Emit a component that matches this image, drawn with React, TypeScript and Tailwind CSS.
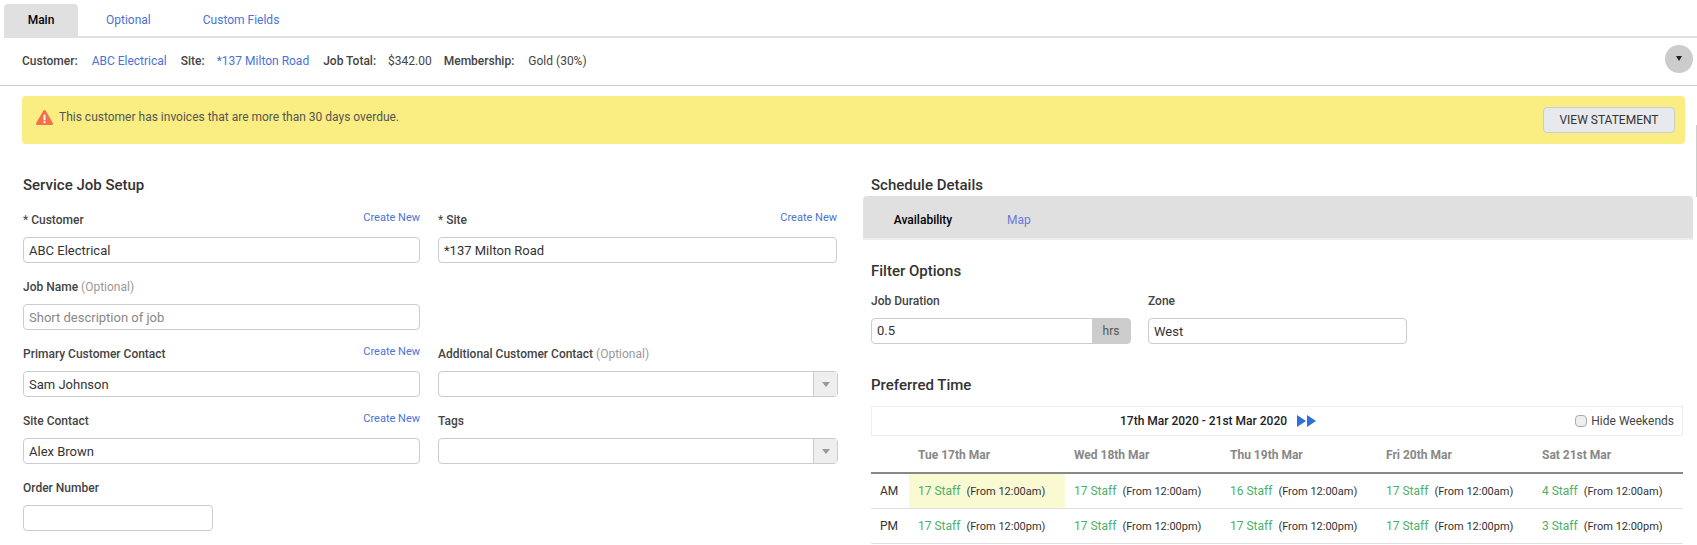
import React from "react";

const inputCls =
  "block h-6.5 w-full rounded-sm border border-[#ccc] bg-white px-1.25 text-[#333] placeholder:text-[#888] outline-none";

function Label({ children, note, link }: { children: React.ReactNode; note?: string; link?: boolean }) {
  return (
    <div className="mb-[9px] flex h-4 items-center justify-between">
      <span className="text-xs leading-4 font-medium text-[#444]">
        {children}
        {note && <span className="font-normal text-[#999]"> {note}</span>}
      </span>
      {link && <a className="relative -top-0.5 text-[11px] text-[#4a72d8]">Create New</a>}
    </div>
  );
}

function Field({ label, value, placeholder, link, note }: { label: React.ReactNode; value?: string; placeholder?: string; link?: boolean; note?: string }) {
  return (
    <div>
      <Label link={link} note={note}>{label}</Label>
      <input className={inputCls} defaultValue={value} placeholder={placeholder} readOnly />
    </div>
  );
}

function SelectField({ label, note }: { label: string; note?: string }) {
  return (
    <div>
      <Label note={note}>{label}</Label>
      <div className="-mr-px flex h-6.5 rounded-sm border border-[#ccc] bg-white">
        <div className="flex-1" />
        <div className="flex w-6 items-center justify-center border-l border-[#ccc] bg-[#eee]">
          <span className="border-x-4 border-t-[5px] border-x-transparent border-t-[#999]" />
        </div>
      </div>
    </div>
  );
}

function Required({ children }: { children: string }) {
  return (
    <>
      <span className="font-normal">* </span>
      {children}
    </>
  );
}

const days = ["Tue 17th Mar", "Wed 18th Mar", "Thu 19th Mar", "Fri 20th Mar", "Sat 21st Mar"];
const am = ["17", "17", "16", "17", "4"];
const pm = ["17", "17", "17", "17", "3"];
const gridCls = "grid grid-cols-[38px_repeat(4,156px)_1fr]";

function Slot({ staff, from, highlight }: { staff: string; from: string; highlight?: boolean }) {
  return (
    <div className={`flex items-center gap-1.5 pl-2.25 ${highlight ? "bg-[#f9f9d2]" : ""}`}>
      <span className="text-xs text-[#4caf6a]">{staff} Staff</span>
      <span className="mt-0.5 text-[11px] text-[#333]">(From {from})</span>
    </div>
  );
}

export default function App() {
  return (
    <div className="relative h-screen overflow-hidden bg-white font-['Roboto',sans-serif] text-[13px] text-[#333]">
      {/* Scrollbar sliver at the window edge */}
      <div className="absolute top-[125px] right-0 h-18 w-px bg-[#ccc]" />

      {/* Top tabs */}
      <div className="ml-1 flex h-9.5 items-end border-b-2 border-[#e0e0e0] pt-1">
        <div className="flex h-full w-[74px] items-center justify-center rounded-t-sm bg-[#e0e0e0] text-xs font-medium text-black">Main</div>
        <div className="flex h-full items-center pl-7 text-xs text-[#4a72d8]">Optional</div>
        <div className="flex h-full items-center pl-13 text-xs text-[#4a72d8]">Custom Fields</div>
      </div>

      {/* Summary */}
      <div className="flex h-12 items-center border-b border-[#ccc] pr-1 pb-0.5 pl-[22px] text-xs">
        <span className="font-medium text-[#444]">Customer:</span>
        <span className="ml-3.5 text-[#4a72d8]">ABC Electrical</span>
        <span className="ml-3.5 font-medium text-[#444]">Site:</span>
        <span className="ml-3 text-[#4a72d8]">*137 Milton Road</span>
        <span className="ml-3.5 font-medium text-[#444]">Job Total:</span>
        <span className="ml-3 text-[#444]">$342.00</span>
        <span className="ml-3 font-medium text-[#444]">Membership:</span>
        <span className="ml-3.5 text-[#444]">Gold (30%)</span>
        <button className="mb-1 ml-auto flex h-7 w-7 items-center justify-center rounded-full bg-[#ccc]">
          <span className="border-x-[3.5px] border-t-[5px] border-x-transparent border-t-[#222]" />
        </button>
      </div>

      {/* Alert */}
      <div className="mt-2.5 mr-3 ml-[22px] flex h-12 items-center justify-between rounded-sm bg-[#faee82] pr-2.5 pl-3.5">
        <div className="mb-1.5 flex items-center gap-1.5 text-xs text-[#555]">
          <svg width="17" height="17" viewBox="0 0 18 17">
            <path d="M9 2 L16.5 15 H1.5 Z" fill="#f4704a" stroke="#f4704a" strokeWidth="3" strokeLinejoin="round" />
            <rect x="8" y="5.5" width="2" height="6" fill="#fff" />
            <rect x="8" y="12.5" width="2" height="2" fill="#fff" />
          </svg>
          This customer has invoices that are more than 30 days overdue.
        </div>
        <button className="h-6.5 w-[132px] rounded-sm border border-[#ccc] bg-[#e8e9ed] text-xs text-[#333]">VIEW STATEMENT</button>
      </div>

      <div className="flex">
        {/* Left */}
        <div className="w-[863px] shrink-0 pt-7 pl-[23px]">
          <h2 className="mb-4 h-6 text-[15px] leading-6.5 font-medium text-[#333]">Service Job Setup</h2>
          <div className="grid w-[814px] grid-cols-[397px_1fr] gap-x-[18px] gap-y-4">
            <Field label={<Required>Customer</Required>} value="ABC Electrical" link />
            <Field label={<Required>Site</Required>} value="*137 Milton Road" link />
            <Field label="Job Name" note="(Optional)" placeholder="Short description of job" />
            <div />
            <Field label="Primary Customer Contact" value="Sam Johnson" link />
            <SelectField label="Additional Customer Contact" note="(Optional)" />
            <Field label="Site Contact" value="Alex Brown" link />
            <SelectField label="Tags" />
            <div className="w-[190px]">
              <Field label="Order Number" />
            </div>
          </div>
        </div>

        {/* Right */}
        <div className="min-w-0 flex-1 pt-7 pr-1">
          <h2 className="h-6 pl-2 text-[15px] leading-6.5 font-medium text-[#333]">Schedule Details</h2>
          <div className="flex h-11 rounded-t-sm border-b-2 border-[#eee] bg-[#e0e0e0] pt-1.5 pl-4">
            <div className="flex w-[88px] items-center justify-center text-xs font-medium text-black">Availability</div>
            <div className="flex items-center pl-10 text-xs text-[#6a7ad8]">Map</div>
          </div>

          <div className="pr-2.5 pl-2">
            <h2 className="mt-5 mb-2 h-6 text-[15px] leading-5.5 font-medium text-[#333]">Filter Options</h2>
            <div className="flex gap-[17px]">
              <div className="w-[260px]">
                <div className="mb-2 flex h-4.5 items-center text-xs font-medium text-[#444]">Job Duration</div>
                <div className="flex h-6.5 rounded-sm border border-[#ccc]">
                  <span className="flex flex-1 items-center px-1.25">0.5</span>
                  <span className="flex w-[38px] items-center justify-center bg-[#ccc] text-xs text-[#555]">hrs</span>
                </div>
              </div>
              <div className="w-[259px]">
                <div className="mb-2 flex h-4.5 items-center text-xs font-medium text-[#444]">Zone</div>
                <input className={inputCls} defaultValue="West" readOnly />
              </div>
            </div>

            <h2 className="mt-7 mb-2.5 h-6 text-[15px] leading-6.5 font-medium text-[#333]">Preferred Time</h2>
            <div className="relative flex h-7.5 items-center border border-[#eee] pl-62">
              <span className="text-xs font-medium text-[#222]">17th Mar 2020 - 21st Mar 2020</span>
              <svg className="ml-2.5" width="19" height="12" viewBox="0 0 19 12">
                <path d="M0 0 L9 6 L0 12 Z M10 0 L19 6 L10 12 Z" fill="#2f6fdc" />
              </svg>
              <div className="absolute top-0 right-2 flex h-full items-center gap-1 text-xs text-[#444]">
                <span className="h-3 w-3 rounded-sm border border-[#aaa] bg-[#eee]" />
                Hide Weekends
              </div>
            </div>
            <div className={`${gridCls} h-9.5 border-b-2 border-[#888] pt-0.5 text-xs font-bold text-[#888]`}>
              <div />
              {days.map((d) => (
                <div key={d} className="flex items-center pl-2.25">{d}</div>
              ))}
            </div>
            <div className={`${gridCls} h-8.75 border-b border-[#e0e0e0]`}>
              <div className="flex items-center pl-2.25 text-xs">AM</div>
              {am.map((s, i) => (
                <Slot key={i} staff={s} from="12:00am" highlight={i === 0} />
              ))}
            </div>
            <div className={`${gridCls} h-8.75 border-b border-[#e0e0e0]`}>
              <div className="flex items-center pl-2.25 text-xs">PM</div>
              {pm.map((s, i) => (
                <Slot key={i} staff={s} from="12:00pm" />
              ))}
            </div>
          </div>
        </div>
      </div>
    </div>
  );
}
